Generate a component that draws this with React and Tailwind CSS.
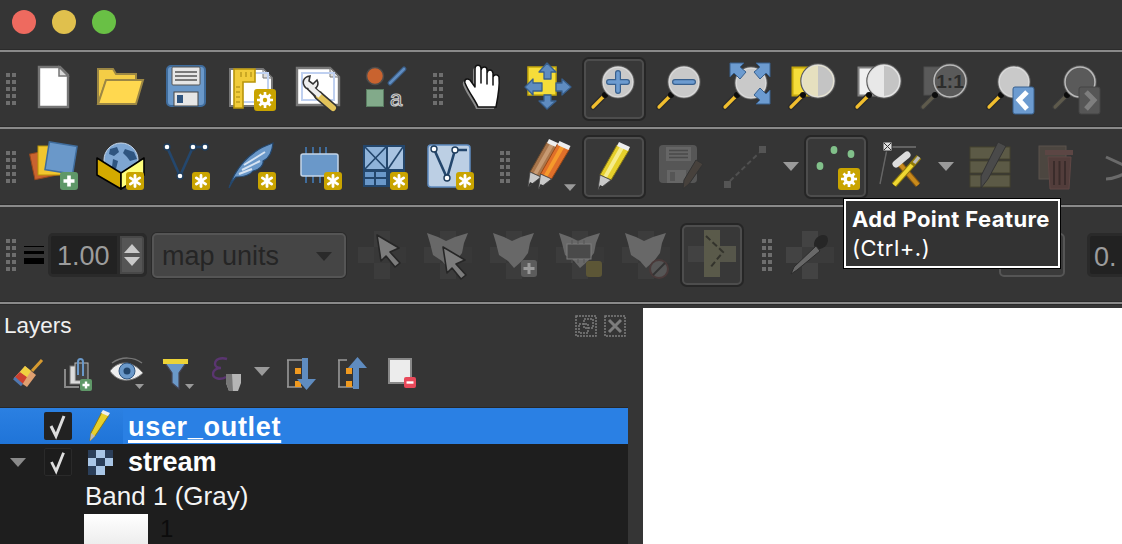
const sans = { fontFamily: '"Liberation Sans", Arial, sans-serif' }

const Grip = ({ className = "" }) => (
  <div className={`grid w-[10px] shrink-0 grid-cols-2 gap-x-[2px] gap-y-[3px] ${className}`}>
    {Array.from({ length: 10 }).map((_, i) => (
      <span key={i} className="h-[4px] w-[4px] bg-[#6e6e6e]" />
    ))}
  </div>
)

const Slot = ({ children, active }) => (
  <div className="flex h-[60px] w-[66px] shrink-0 items-center justify-center">
    {active ? (
      <div className="h-[60px] w-[60px] rounded-[5px] border-2 border-[#4d4d4d] bg-[#383838] shadow-[0_0_0_2px_#262626]">
        <div className="-m-[2px]">{children}</div>
      </div>
    ) : (
      children
    )}
  </div>
)

const Svg = ({ children }) => (
  <svg width="60" height="60" viewBox="0 0 60 60" fill="none" className="block">
    {children}
  </svg>
)

const Arrow = ({ className = "" }) => (
  <div className={`h-0 w-0 shrink-0 border-x-[8px] border-t-[9px] border-x-transparent border-t-[#9a9a9a] ${className}`} />
)

// gold "new" badge with asterisk
const Badge = ({ x = 36, y = 35, s = 18 }) => (
  <g transform={`translate(${x} ${y})`}>
    <rect width={s} height={s} rx="3" fill="#c9a400" />
    <g stroke="#fff" strokeWidth="2.8" strokeLinecap="round">
      <path d={`M${s / 2} 3.5V${s - 3.5}`} />
      <path d={`M${s * 0.24} ${s * 0.33}L${s * 0.76} ${s * 0.67}`} />
      <path d={`M${s * 0.24} ${s * 0.67}L${s * 0.76} ${s * 0.33}`} />
    </g>
  </g>
)

const GearBadge = ({ x = 32, y = 30 }) => (
  <g transform={`translate(${x} ${y})`}>
    <rect width="22" height="22" rx="3" fill="#c9a400" />
    <path d="M11 3v16M3 11h16M5.500 5.500l11 11M16.500 5.500l-11 11" stroke="#fff" strokeWidth="2.6" />
    <circle cx="11" cy="11" r="5.500" fill="#fff" />
    <circle cx="11" cy="11" r="2.200" fill="#c9a400" />
  </g>
)

const Glass = ({ cx = 34, cy = 23, r = 15, fill = "#c9c9c9", handle = "#f2bf2e", edge = "#2b2b2b", children }) => (
  <>
    <path d="M19 38L9 48" stroke={edge} strokeWidth="6" strokeLinecap="round" />
    <path d="M19 38L9 48" stroke={handle} strokeWidth="3.200" strokeLinecap="round" />
    <path d={`M${cx - r * 0.7} ${cy + r * 0.7}L21 36`} stroke="#333" strokeWidth="3" />
    <circle cx="21" cy="36" r="3" fill="#0c0c0c" />
    <circle cx={cx} cy={cy} r={r + 1} fill={fill} stroke="#555" strokeWidth="1.500" />
    <circle cx={cx} cy={cy} r={r} stroke="#e4e4e4" strokeOpacity="0.7" strokeWidth="1.500" />
    {children}
  </>
)

const NewDoc = () => (
  <Svg>
    <path d="M15 8H36L44 16V48H15Z" fill="#fff" stroke="#757575" strokeWidth="2.400" />
    <path d="M35 8V17H44Z" fill="#d8d8d8" stroke="#757575" strokeWidth="1.500" />
  </Svg>
)

const Folder = () => (
  <Svg>
    <path d="M8 45V10H23L26 15H46V22H16Z" fill="#f4cd46" stroke="#9c8744" strokeWidth="2" />
    <path d="M8 45L16 21H53L46 45Z" fill="#ffd84f" stroke="#9c8744" strokeWidth="2" />
  </Svg>
)

const Save = () => (
  <Svg>
    <rect x="11" y="7" width="38" height="40" rx="4" fill="#6a98c9" stroke="#3f6c9c" strokeWidth="2" />
    <rect x="16" y="8" width="28" height="18" rx="1" fill="#e6e6e6" stroke="#555" />
    <path d="M19 13H41M19 17H41M19 21H41" stroke="#555" strokeWidth="1.600" />
    <rect x="18" y="33" width="24" height="14" fill="#e6e6e6" stroke="#444" />
    <rect x="21" y="36" width="6" height="8" fill="#2f5580" />
  </Svg>
)

const Layout = () => (
  <Svg>
    <path d="M8 10H41L50 19V47H8Z" fill="#fff" stroke="#777" strokeWidth="2" />
    <path d="M41 10V19H50Z" fill="#ddd" stroke="#777" />
    <rect x="18" y="14" width="28" height="29" fill="none" stroke="#c0d2f2" strokeWidth="2" />
    <path d="M12 10H33V23H21V49H12Z" fill="#f1cc3b" stroke="#b8950b" strokeWidth="1.600" />
    <path d="M14 28h4M14 33h4M14 38h4M14 43h4M19 13v5M24 13v5M29 13v5" stroke="#a3840e" />
    <GearBadge />
  </Svg>
)

const Wrench = () => (
  <Svg>
    <path d="M9 9H42L51 18V46H9Z" fill="#fff" stroke="#777" strokeWidth="2.400" />
    <path d="M42 9V18H51Z" fill="#ddd" stroke="#777" />
    <rect x="14" y="14" width="32" height="27" stroke="#bfd0f0" strokeWidth="2" />
    <path d="M22 28L35 41" stroke="#333" strokeWidth="8" strokeLinecap="round" />
    <path d="M30 36L45 49" stroke="#333" strokeWidth="9" strokeLinecap="round" />
    <path d="M31 37L45 49" stroke="#e2c35a" strokeWidth="6" strokeLinecap="round" />
    <path d="M18 29C13 24 15 18 22 17L21 22L25 25L29 21C32 27 27 32 21 30Z" fill="#eee" stroke="#333" strokeWidth="1.600" />
    <path d="M22 28L32 37" stroke="#eee" strokeWidth="5" />
  </Svg>
)

const Symbology = () => (
  <Svg>
    <circle cx="21" cy="17" r="8.500" fill="#c9632f" stroke="#4c4c4c" strokeWidth="1.500" />
    <path d="M36 24L50 10" stroke="#39597f" strokeWidth="5" strokeLinecap="round" />
    <path d="M36 24L50 10" stroke="#5f8cc0" strokeWidth="2.600" strokeLinecap="round" />
    <rect x="12.500" y="30.500" width="17" height="17" fill="#82aa8a" stroke="#5a7d62" />
    <text x="36" y="47" fontSize="22" fill="#2a2a2a" stroke="#c9c9c9" strokeWidth="1.200" style={sans}>a</text>
  </Svg>
)

const handPath = "M13 24C12 20 15 19 18 21L23 28V10C23 5 29 5 29 10V24V11C30 7 35 7 35 11V25V14C36 10 40 10 41 14V26V18C42 15 46 15 47 18C48 28 46 38 44 48H26C24 42 17 34 13 24Z"

const HandIcon = () => (
  <Svg>
    <path d={handPath} fill="#8a8a8a" transform="translate(-2 2)" />
    <path d={handPath} fill="#fff" stroke="#111" strokeWidth="1.500" strokeLinejoin="round" />
  </Svg>
)

const PanSel = () => (
  <Svg>
    <rect x="10" y="8" width="28" height="28" fill="#f6dd3a" stroke="#c5a80c" strokeWidth="1.500" />
    <g fill="#5f8cc0" stroke="#38608e" strokeWidth="1.300" strokeLinejoin="round">
      <path d="M29 4L38 13H33V20H26V13H21Z" />
      <path d="M29 50L38 42H33V36H26V42H21Z" />
      <path d="M7 28L15 20V24H24V32H15V36Z" />
      <path d="M53 28L44 20V24H38V32H44V36Z" />
    </g>
  </Svg>
)

const ZoomIn = () => (
  <Svg>
    <Glass>
      <path d="M34 14V32M25 23H43" stroke="#38608e" strokeWidth="6" strokeLinecap="round" />
      <path d="M34 14V32M25 23H43" stroke="#6c9bd0" strokeWidth="3.600" strokeLinecap="round" />
    </Glass>
  </Svg>
)

const ZoomOut = () => (
  <Svg>
    <Glass>
      <path d="M25 23H43" stroke="#38608e" strokeWidth="6" strokeLinecap="round" />
      <path d="M25 23H43" stroke="#6c9bd0" strokeWidth="3.600" strokeLinecap="round" />
    </Glass>
  </Svg>
)

const ZoomFull = () => (
  <Svg>
    <Glass cx={35} cy={24} r={15}>
      <g fill="#6c9bd0" stroke="#38608e">
        <path d="M14 4H28L24 8L30 13L24 20L18 14L14 18Z" />
        <path d="M54 4V18L50 14L44 20L38 13L44 8L40 4Z" />
        <path d="M54 45H40L44 41L38 36L44 29L50 35L54 31Z" />
      </g>
    </Glass>
  </Svg>
)

const ZoomLayerIcon = ({ yellow }) => (
  <Svg>
    <rect x="10.500" y="8.500" width="18" height="28" fill={yellow ? "#f6dd3a" : "#efefef"} stroke={yellow ? "#c5a80c" : "#808080"} strokeWidth="2" />
    <Glass cx={36} cy={22} r={16} fill={yellow ? "#e6e0bf" : "#e8e8e8"}>
      <path d="M36 7A15 15 0 0 1 36 37Z" fill="#c4c4c4" />
    </Glass>
  </Svg>
)

const ZoomOne = () => (
  <Svg>
    <rect x="10" y="8" width="16" height="28" fill="#5a5a5a" stroke="#505050" />
    <Glass cx={36} cy={22} r={16} fill="#5a5a5a" handle="#5e5a4c" edge="#3a3a3a">
      <text x="36" y="29" textAnchor="middle" fontSize="19" fontWeight="700" fill="#2c2c2c" style={sans}>1:1</text>
    </Glass>
  </Svg>
)

const ZoomLast = () => (
  <Svg>
    <Glass>
      <rect x="33" y="28" width="21" height="27" rx="2" fill="#6c9bd0" stroke="#38608e" />
      <path d="M47 33L39 41L47 50" stroke="#fff" strokeWidth="5" />
    </Glass>
  </Svg>
)

const ZoomNext = () => (
  <Svg>
    <Glass fill="#5a5a5a" handle="#5e5a4c" edge="#3a3a3a">
      <rect x="33" y="28" width="21" height="27" rx="2" fill="#565656" stroke="#444" />
      <path d="M40 33L48 41L40 50" stroke="#7e7e7e" strokeWidth="5" />
    </Glass>
  </Svg>
)

const DataSource = () => (
  <Svg>
    <rect x="8" y="14" width="28" height="26" fill="#c9632f" stroke="#96481e" transform="rotate(-12 22 27)" />
    <rect x="14" y="9" width="28" height="29" fill="#f1c62f" stroke="#b8950b" />
    <rect x="23" y="7" width="28" height="28" fill="#6a98c9" stroke="#3f6c9c" strokeWidth="1.500" transform="rotate(9 37 21)" />
    <rect x="36" y="35" width="18" height="18" rx="3" fill="#5f9868" />
    <path d="M45 38.500V49.500M39.500 44H50.500" stroke="#fff" strokeWidth="3.600" />
  </Svg>
)

const GeoPackage = () => (
  <Svg>
    <circle cx="31" cy="23" r="17" fill="#7ea6d2" stroke="#c6d6e8" />
    <path d="M20 12L27 10L29 15L24 19L19 17ZM35 12L44 15L47 22L40 24L37 20L33 16ZM23 22L28 24L26 32L22 30Z" fill="#2f5580" />
    <path d="M7 21L31 36V52L7 38Z" fill="#d4aa00" stroke="#000" strokeWidth="1.600" strokeLinejoin="round" />
    <path d="M31 36L54 21V38L31 52Z" fill="#ffff7c" stroke="#000" strokeWidth="1.600" strokeLinejoin="round" />
    <Badge />
  </Svg>
)

const Dot = ({ x, y }) => <circle cx={x} cy={y} r="3" fill="#fff" stroke="#1f3d5c" strokeWidth="1.400" />

const NewShape = () => (
  <Svg>
    <path d="M11 10L24 39L37 10H49" stroke="#24476d" strokeWidth="2.600" />
    <Dot x={11} y={10} />
    <Dot x={24} y={39} />
    <Dot x={37} y={10} />
    <Dot x={49} y={10} />
    <Badge />
  </Svg>
)

const Feather = () => (
  <Svg>
    <path d="M7 51C12 34 26 14 51 6C50 16 46 22 41 24C42 28 37 33 31 34C28 38 22 40 14 40C11 43 9 47 7 51Z" fill="#6a98c9" stroke="#24476d" strokeWidth="1.200" />
    <path d="M22 28L43 15M20 33L38 24M17 37L30 32" stroke="#d6e3f2" strokeWidth="2" />
    <Badge />
  </Svg>
)

const Chip = () => (
  <Svg>
    <path d="M18 10V17M25 10V17M32 10V17M38 10V17M18 39V46M25 39V46M32 39V46" stroke="#3f6c9c" strokeWidth="2" />
    <rect x="13" y="17" width="37" height="22" rx="2" fill="#6a98c9" stroke="#c3d5e9" strokeWidth="1.500" />
    <Badge />
  </Svg>
)

const VirtualLayer = () => (
  <Svg>
    <rect x="9" y="8" width="42" height="42" fill="#23466c" />
    <rect x="11" y="10" width="21" height="22" fill="#8fb3d9" />
    <path d="M11 10L32 32M32 10L11 32" stroke="#23466c" strokeWidth="1.600" />
    <rect x="34" y="10" width="15" height="22" fill="#a9c4e2" />
    <path d="M49 10L34 32" stroke="#23466c" strokeWidth="1.600" />
    <path d="M11 35H32V48H11Z" fill="#6a98c9" />
    <path d="M11 41H32M21 35V48" stroke="#23466c" strokeWidth="2" />
    <Badge />
  </Svg>
)

const MeshLayer = () => (
  <Svg>
    <rect x="8" y="8" width="42" height="42" rx="3" fill="#bccfe4" stroke="#5f8cc0" strokeWidth="1.500" />
    <path d="M14 12L27 41L35 13H47" stroke="#24476d" strokeWidth="2.600" />
    <Dot x={14} y={12} />
    <Dot x={27} y={41} />
    <Dot x={35} y={13} />
    <Badge />
  </Svg>
)

const Pencil = ({ x = 0, y = 0, body = "#e6d02c", light = "#f6ec8c", dark = "#8d7c14" }) => (
  <g transform={`translate(${x} ${y})`}>
    <path d="M33 8L45 13L27 43L16 38Z" fill={body} stroke={dark} strokeWidth="1" />
    <path d="M36 9.500L40 11L23 40.500L19.500 39Z" fill={light} />
    <path d="M35 5L46 10L44 14L33 9Z" fill="#eeeeee" />
    <path d="M16 38L27 43L14 53Z" fill="#c9c9c9" stroke="#444" strokeWidth="0.800" />
    <path d="M16 48L19 49.500L14 53Z" fill="#333" />
  </g>
)

const Pencils = () => (
  <Svg>
    <Pencil x={-4} y={-3} body="#a9764c" light="#c79a72" dark="#6c4a2c" />
    <Pencil x={6.500} y={-1} body="#e0702a" light="#f59a2c" dark="#9c4816" />
  </Svg>
)

const PencilIcon = () => (
  <Svg>
    <Pencil />
  </Svg>
)

const SaveEdits = () => (
  <Svg>
    <rect x="9" y="8" width="38" height="38" rx="4" fill="#565656" />
    <rect x="16" y="10" width="25" height="14" fill="#666" />
    <path d="M19 13.500H38M19 17H38M19 20.500H38" stroke="#4a4a4a" strokeWidth="1.500" />
    <rect x="17" y="33" width="19" height="13" fill="#666" />
    <rect x="20" y="35" width="5" height="9" fill="#565656" />
    <path d="M46 23L53 27L39 47L33 52L34 43Z" fill="#47413c" stroke="#333" />
  </Svg>
)

const LineIcon = () => (
  <Svg>
    <rect x="8" y="44" width="7" height="7" fill="#555" />
    <rect x="43" y="9" width="7" height="7" fill="#555" />
    <path d="M14 44L43 16" stroke="#505050" strokeWidth="2" strokeDasharray="5 3" />
  </Svg>
)

const PointIcon = () => (
  <Svg>
    <ellipse cx="28" cy="13" rx="3.400" ry="4" fill="#81c08a" />
    <ellipse cx="45" cy="17" rx="3.400" ry="4" fill="#81c08a" />
    <ellipse cx="14" cy="29" rx="3.400" ry="4" fill="#81c08a" />
    <GearBadge x={32} y={31} />
  </Svg>
)

const VertexTool = () => (
  <Svg>
    <path d="M15 12L8 47" stroke="#666" strokeWidth="1.400" />
    <path d="M20 10H44" stroke="#777" strokeWidth="1.400" />
    <rect x="11" y="5" width="9" height="9" fill="#ddd" stroke="#333" />
    <path d="M12 6L19 13M19 6L12 13" stroke="#333" />
    <path d="M27 26L46 48" stroke="#8a5a10" strokeWidth="6" />
    <path d="M27 26L46 48" stroke="#c98a1c" strokeWidth="4" />
    <path d="M22 48L47 20" stroke="#8f7a0a" strokeWidth="6" />
    <path d="M22 48L40 28" stroke="#efd732" strokeWidth="4" />
    <path d="M42 26L47 20" stroke="#bbb" strokeWidth="3.500" />
    <path d="M24 27L35 18" stroke="#ddd" strokeWidth="7" strokeLinecap="round" />
  </Svg>
)

const EditTable = () => (
  <Svg>
    <rect x="10" y="10" width="40" height="12" fill="#5c5a46" stroke="#44422f" />
    <rect x="10" y="24" width="40" height="12" fill="#5c5a46" stroke="#44422f" />
    <rect x="10" y="38" width="40" height="12" fill="#5c5a46" stroke="#44422f" />
    <path d="M38 5L46 9L28 42L21 51L21 39Z" fill="#4a4a4a" stroke="#333" />
  </Svg>
)

const Trash = () => (
  <Svg>
    <rect x="13" y="9" width="27" height="33" fill="#4c4640" stroke="#5a524c" />
    <path d="M19 13H47V18H19Z" fill="#5c4644" />
    <path d="M22 20H45L43 52H24Z" fill="#523d3b" stroke="#5f4745" />
    <path d="M28 24V48M33.500 24V48M39 24V48" stroke="#3a2c2b" strokeWidth="2" />
  </Svg>
)

const Scissors = () => (
  <Svg>
    <path d="M14 20L44 34M14 42C22 42 30 38 42 32" stroke="#6a6a6a" strokeWidth="3" />
    <ellipse cx="46" cy="34" rx="5" ry="3" stroke="#5a5a5a" strokeWidth="2" />
  </Svg>
)

// checkered placeholder behind the disabled tools of the third toolbar
const Tile = ({ children, tint = "#3c3c3c", tint2 = "#383838" }) => (
  <Svg>
    <path d="M22 6H38V22H54V38H38V54H22V38H6V22H22Z" fill={tint2} />
    <path d="M22 6H38V22H22ZM22 38H38V54H22ZM6 22H22V38H6Z" fill={tint} />
    {children}
  </Svg>
)

const Cursor = ({ x = 0, y = 0 }) => (
  <path
    transform={`translate(${x} ${y})`}
    d="M20 8L42 21L33 25L43 36L38 40L29 29L24 34Z"
    fill="#7c7c7c"
    stroke="#262626"
    strokeWidth="1.600"
    strokeLinejoin="round"
  />
)

const Shield = () => <path d="M9 8L20 12L28 16L37 12L50 8L46 18L44 28L38 36L30 43L24 36L15 30L12 18Z" fill="#686868" />

const ThirdIcons = [
  <Tile key="a"><Cursor x={5} y={2} /></Tile>,
  <Tile key="b"><Shield /><Cursor x={5} y={14} /></Tile>,
  <Tile key="c">
    <Shield />
    <rect x="37" y="35" width="16" height="17" rx="3" fill="#5c5c5c" />
    <path d="M45 38V49M39.500 43.500H50.500" stroke="#9a9a9a" strokeWidth="3" />
  </Tile>,
  <Tile key="d">
    <Shield />
    <rect x="17" y="19" width="24" height="15" fill="#4a4a4a" stroke="#7c7c7c" />
    <path d="M22 15V19M28 15V19M34 15V19M22 34V38M28 34V38M34 34V38" stroke="#555" />
    <rect x="36" y="36" width="16" height="16" rx="3" fill="#5c5636" />
  </Tile>,
  <Tile key="e">
    <Shield />
    <circle cx="43" cy="44" r="9" fill="#565656" stroke="#4a3a3a" strokeWidth="2" />
    <path d="M37 50L49 38" stroke="#333" strokeWidth="2" />
  </Tile>,
]

const Chevron = () => (
  <Svg>
    <rect x="6" y="21" width="16" height="16" fill="#424242" />
    <rect x="38" y="21" width="16" height="16" fill="#56564a" />
    <rect x="22" y="5" width="16" height="47" fill="#5a5a4a" />
    <path d="M24 11L41 27L28 43" stroke="#33332c" strokeWidth="2" strokeDasharray="6 3" />
  </Svg>
)

const Dropper = () => (
  <Tile tint="#434343" tint2="#3b3b3b">
    <ellipse cx="41" cy="17" rx="6" ry="8" transform="rotate(45 41 17)" fill="#262626" />
    <path d="M36 21L40 26L17 45L11 49L14 42Z" fill="#686868" stroke="#2c2c2c" />
  </Tile>
)

const SpinBox = ({ text, className = "" }) => (
  <div className={`flex h-[44px] shrink-0 overflow-hidden rounded-[5px] border-[3px] border-[#2a2a2a] bg-[#2a2a2a] ${className}`} style={sans}>
    <div className="flex h-full w-[66px] items-center bg-[#222] pl-[6px] pt-[3px] text-[27px] text-[#9c9c9c]">{text}</div>
    <div className="ml-[3px] flex h-full flex-1 flex-col items-center justify-center gap-[4px] rounded-r-[3px] border-2 border-[#484848] bg-[#555]">
      <div className="h-0 w-0 border-x-[8px] border-b-[9px] border-x-transparent border-b-[#c9c9c9]" />
      <div className="h-0 w-0 border-x-[8px] border-t-[9px] border-x-transparent border-t-[#c9c9c9]" />
    </div>
  </div>
)

const Toolbar = ({ children, className = "" }) => (
  <div className={`flex shrink-0 items-center pl-[6px] ${className}`}>{children}</div>
)

const Rule = () => (
  <>
    <div className="h-[1px] shrink-0 bg-[#2b2b2b]" />
    <div className="h-[2px] shrink-0 bg-[#8a8a8a]" />
  </>
)

const Mini = ({ children, className = "" }) => (
  <svg width="34" height="34" viewBox="0 0 34 34" fill="none" className={`block shrink-0 ${className}`}>
    {children}
  </svg>
)

const LayerTools = () => (
  <div className="flex h-[36px] items-center">
    <Mini className="ml-[10px]">
      <path d="M4 21L15 9L26 18L17 30Z" fill="#e0a070" />
      <path d="M4 21L10 15L17 20L12 28Z" fill="#cc4030" />
      <path d="M10 15L15 9L21 14L17 20Z" fill="#f0d040" />
      <path d="M4 21L12 28" stroke="#5078b0" strokeWidth="3" />
      <path d="M22 14L32 3" stroke="#d69a30" strokeWidth="3" />
    </Mini>
    <Mini className="ml-[17px]">
      <path d="M4 12V30H18" stroke="#888" strokeWidth="2" />
      <rect x="9" y="9" width="15" height="18" fill="#ddd" stroke="#777" />
      <rect x="14" y="6" width="13" height="18" fill="#444" stroke="#bbb" />
      <path d="M17 18V5C17 1 22 1 22 5V19" stroke="#6a98c9" strokeWidth="2" />
      <rect x="19" y="22" width="12" height="12" rx="2" fill="#5f9868" />
      <path d="M25 24.500V31.500M21.500 28H28.500" stroke="#fff" strokeWidth="2.400" />
    </Mini>
    <Mini className="ml-[15px]">
      <path d="M0 14C8 3 22 3 33 16C22 26 8 26 0 14Z" fill="#eee" stroke="#777" />
      <circle cx="17" cy="14" r="8" fill="#6a98c9" stroke="#2f5580" />
      <circle cx="17" cy="14" r="3.500" fill="#23466c" />
      <path d="M2 6C12 -1 24 0 32 6" stroke="#777" strokeWidth="1.500" />
      <path d="M25 27H34L29.500 32Z" fill="#9a9a9a" />
    </Mini>
    <Mini className="ml-[17px]">
      <path d="M2 3H27L18 16V32L11 26V16Z" fill="#6a98c9" stroke="#445" strokeWidth="1.200" />
      <rect x="2" y="2" width="25" height="5" fill="#ecd338" />
      <path d="M24 27H33L28.500 32Z" fill="#9a9a9a" />
    </Mini>
    <Mini className="ml-[17px]">
      <path d="M15 2C9 0 3 2 3 7C3 10 6 11 9 11C5 11 1 13 1 17C1 22 9 23 14 20" stroke="#5a3570" strokeWidth="2.400" />
      <path d="M14 17H29V26L26 34H17L14 26Z" fill="#b5b5b5" />
      <path d="M14 17H20L21 34H17L14 26Z" fill="#777" />
    </Mini>
    <Arrow className="ml-[8px] -mt-[6px]" />
    <Mini className="ml-[16px]">
      <path d="M1 3H16M1 30H16M2 3V30" stroke="#999" strokeWidth="1.600" />
      <rect x="9" y="11" width="6" height="6" fill="#f09a20" />
      <rect x="9" y="24" width="6" height="6" fill="#f09a20" />
      <path d="M19 1V24" stroke="#5f8cc0" strokeWidth="6" />
      <path d="M11 22H30L20.500 33Z" fill="#5f8cc0" />
    </Mini>
    <Mini className="ml-[17px]">
      <path d="M1 3H10M1 30H16M2 3V30" stroke="#999" strokeWidth="1.600" />
      <rect x="9" y="11" width="6" height="6" fill="#f09a20" />
      <rect x="9" y="24" width="6" height="6" fill="#f09a20" />
      <path d="M19 32V10" stroke="#5f8cc0" strokeWidth="6" />
      <path d="M11 11H30L20.500 0Z" fill="#5f8cc0" />
    </Mini>
    <Mini className="ml-[16px]">
      <rect x="2" y="2" width="22" height="24" fill="#ececec" stroke="#888" strokeWidth="2" />
      <rect x="17" y="20" width="12" height="11" rx="2" fill="#e8495a" />
      <path d="M19.500 25.500H26.500" stroke="#fff" strokeWidth="2.400" />
    </Mini>
  </div>
)

const Check = () => (
  <svg width="28" height="28" viewBox="0 0 28 28" fill="none">
    <path d="M7 14L12 24L20 4" stroke="#dedede" strokeWidth="3" />
  </svg>
)

const rasterCells = [
  "#2b3f5a", "#a9c6e6", "#2b3f5a",
  "#a9c6e6", "#2b3f5a", "#a9c6e6",
  "#2b3f5a", "#a9c6e6", "transparent",
]

export default function App() {
  return (
    <div className="relative flex h-[544px] w-[1122px] flex-col overflow-hidden bg-[#353535]">
      {/* title bar */}
      <div className="flex h-[49px] shrink-0 items-start gap-[16px] pl-[12px] pt-[10px]">
        <span className="h-[24px] w-[24px] rounded-full bg-[#ee6a5f]" />
        <span className="h-[24px] w-[24px] rounded-full bg-[#e0c04d]" />
        <span className="h-[24px] w-[24px] rounded-full bg-[#69c045]" />
      </div>
      <Rule />

      <Toolbar className="h-[74px]">
        <Grip />
        <div className="ml-[5px] flex">
          <Slot><NewDoc /></Slot>
          <Slot><Folder /></Slot>
          <Slot><Save /></Slot>
          <Slot><Layout /></Slot>
          <Slot><Wrench /></Slot>
          <Slot><Symbology /></Slot>
        </div>
        <Grip className="ml-[16px]" />
        <div className="ml-[6px] flex">
          <Slot><HandIcon /></Slot>
          <Slot><PanSel /></Slot>
          <Slot active><ZoomIn /></Slot>
          <Slot><ZoomOut /></Slot>
          <Slot><ZoomFull /></Slot>
          <Slot><ZoomLayerIcon yellow /></Slot>
          <Slot><ZoomLayerIcon /></Slot>
          <Slot><ZoomOne /></Slot>
          <Slot><ZoomLast /></Slot>
          <Slot><ZoomNext /></Slot>
        </div>
      </Toolbar>
      <Rule />

      <Toolbar className="h-[75px]">
        <Grip />
        <div className="ml-[5px] flex">
          <Slot><DataSource /></Slot>
          <Slot><GeoPackage /></Slot>
          <Slot><NewShape /></Slot>
          <Slot><Feather /></Slot>
          <Slot><Chip /></Slot>
          <Slot><VirtualLayer /></Slot>
          <Slot><MeshLayer /></Slot>
        </div>
        <Grip className="ml-[17px]" />
        <div className="ml-[5px] flex items-center">
          <div className="relative">
            <Slot><Pencils /></Slot>
            <Arrow className="absolute bottom-[5px] right-[3px] scale-75" />
          </div>
          <Slot active><PencilIcon /></Slot>
          <Slot><SaveEdits /></Slot>
          <Slot><LineIcon /></Slot>
          <div className="flex w-[24px] justify-center"><Arrow /></div>
          <Slot active><PointIcon /></Slot>
          <Slot><VertexTool /></Slot>
          <div className="flex w-[22px] justify-center"><Arrow /></div>
          <Slot><EditTable /></Slot>
          <Slot><Trash /></Slot>
          <Slot><Scissors /></Slot>
        </div>
      </Toolbar>
      <Rule />

      <Toolbar className="h-[94px] pt-[2px]">
        <Grip />
        <div className="ml-[8px] flex w-[20px] shrink-0 flex-col">
          <span className="h-[1px] bg-black" />
          <span className="mt-[4px] h-[3px] bg-black" />
          <span className="mt-[4px] h-[6px] bg-black" />
        </div>
        <SpinBox text="1.00" className="ml-[4px] w-[99px]" />
        <div className="ml-[5px] flex h-[45px] w-[194px] shrink-0 items-center justify-between rounded-[5px] border-2 border-[#555] bg-[#454545] pl-[8px] pr-[12px] pt-[3px] text-[27px] text-[#252525] shadow-[0_0_0_1px_#2a2a2a]" style={sans}>
          map units
          <div className="h-0 w-0 border-x-[8px] border-t-[9px] border-x-transparent border-t-[#2a2a2a]" />
        </div>
        <div className="ml-[3px] flex">
          <Slot>{ThirdIcons[0]}</Slot>
          <Slot>{ThirdIcons[1]}</Slot>
          <Slot>{ThirdIcons[2]}</Slot>
          <Slot>{ThirdIcons[3]}</Slot>
          <Slot>{ThirdIcons[4]}</Slot>
        </div>
        <Slot active><Chevron /></Slot>
        <Grip className="ml-[17px]" />
        <div className="ml-[5px] flex"><Slot><Dropper /></Slot></div>
        <div className="ml-[156px] h-[44px] w-[66px] shrink-0 rounded-[5px] border-2 border-[#555] bg-[#3a3a3a]" />
        <div className="ml-[22px] h-[44px] w-[50px] shrink-0 rounded-l-[5px] border-[3px] border-[#2a2a2a] bg-[#222] pl-[4px] pt-[2px] text-[27px] leading-[38px] text-[#9c9c9c]" style={sans}>0.</div>
      </Toolbar>
      <Rule />
      <div className="h-[1px] shrink-0 bg-[#2a2a2a]" />

      {/* layers dock and map canvas */}
      <div className="flex min-h-0 flex-1">
        <div className="flex w-[628px] shrink-0 flex-col" style={sans}>
          <div className="flex h-[40px] shrink-0 items-center justify-between pl-[4px] pr-[2px] pt-[2px] text-[22.500px] text-[#f0f0f0]">
            Layers
            <div className="flex gap-[7px]">
              <svg width="22" height="22" viewBox="0 0 22 22" fill="none" stroke="#7d7d7d" strokeWidth="1.500" strokeDasharray="2 1">
                <rect x="1" y="1" width="20" height="20" />
                <rect x="9" y="4" width="9" height="9" />
                <rect x="4" y="9" width="9" height="9" />
              </svg>
              <svg width="22" height="22" viewBox="0 0 22 22" fill="none" stroke="#7d7d7d" strokeWidth="1.500" strokeDasharray="2 1">
                <rect x="1" y="1" width="20" height="20" />
                <path d="M5 5L17 17M17 5L5 17" strokeWidth="3" strokeDasharray="none" />
              </svg>
            </div>
          </div>
          <div className="flex h-[62px] shrink-0 items-center pb-[4px]">
            <LayerTools />
          </div>
          <div className="flex-1 border-t border-[#282828] bg-[#1e1e1e]">
            <div className="flex h-[36px] items-center bg-gradient-to-b from-[#2b80e2] to-[#1f74d8] pl-[44px]">
              <div className="flex h-[28px] w-[28px] items-center justify-center rounded-[2px] bg-[#222]"><Check /></div>
              <svg width="24" height="34" viewBox="0 0 24 34" fill="none" className="ml-[16px]">
                <path d="M14 3L21 6L7 27L2 32L3 24Z" fill="#e6d02c" stroke="#8d7a16" />
                <path d="M15 1L22 4L20 7L13 4Z" fill="#eee" />
                <path d="M3 24L7 27L2 32Z" fill="#bbb" />
              </svg>
              <span className="ml-[11px] flex h-full flex-1 items-center bg-[#2a80e4] pl-[5px] pt-[2px] text-[27px] font-bold leading-none tracking-[0.7px] text-white underline decoration-[3px] underline-offset-[4px]">
                user_outlet
              </span>
            </div>
            <div className="flex h-[36px] items-center pl-[10px]">
              <div className="h-0 w-0 border-x-[8px] border-t-[9px] border-x-transparent border-t-[#8a8a8a]" />
              <div className="ml-[18px] flex h-[28px] w-[28px] items-center justify-center rounded-[2px] border border-[#2a2a2a] bg-[#1c1c1c]"><Check /></div>
              <div className="ml-[16px] grid h-[25px] w-[25px] grid-cols-3">
                {rasterCells.map((c, i) => (
                  <span key={i} style={{ backgroundColor: c }} />
                ))}
              </div>
              <span className="ml-[15px] text-[27px] font-bold text-white">stream</span>
            </div>
            <div className="flex h-[34px] items-center pb-[2px] pl-[85px] text-[26px] text-[#f4f4f4]">Band 1 (Gray)</div>
            <div className="flex items-start pl-[84px]">
              <div className="h-[40px] w-[64px] bg-gradient-to-b from-white to-[#e8e8e8]" />
              <span className="ml-[12px] mt-[2px] text-[24px] leading-[26px] text-[#0c0c0c]">1</span>
            </div>
          </div>
        </div>
        <div className="flex flex-1 flex-col pl-[15px]">
          <div className="h-[3px] shrink-0" />
          <div className="flex-1 bg-white" />
        </div>
      </div>

      {/* tooltip */}
      <div className="absolute left-[843px] top-[198px] h-[71px] w-[218px] border border-black bg-[#333]">
        <div className="h-full border-2 border-white px-[6px] pt-[4px] text-[22px] leading-[29px] text-white" style={{ fontFamily: "Inter, sans-serif" }}>
          <div className="whitespace-nowrap font-bold tracking-[0.4px]">Add Point Feature</div>
          <div className="whitespace-nowrap tracking-[0.5px]">(Ctrl+.)</div>
        </div>
      </div>
    </div>
  )
}
